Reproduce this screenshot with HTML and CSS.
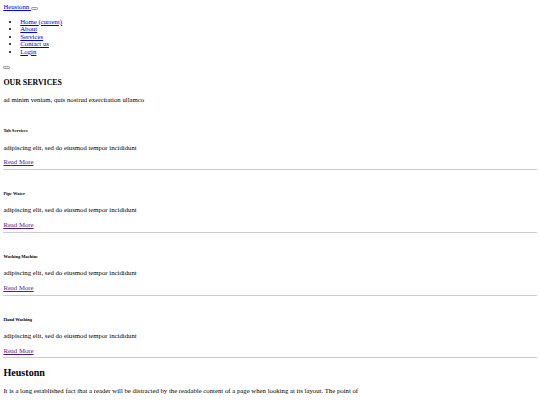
FILE: index.html
```html
<!DOCTYPE html>
<html lang="en">
<head>
    <meta charset="UTF-8">
    <meta name="viewport" content="width=device-width, initial-scale=1.0">
    <title>Heustonn</title>
    <link rel="stylesheet" href="styles.css">
</head>
<body>
    <nav class="navbar">
        <a class="brand" href="#">Heustonn </a><button class="btn"></button>
        <div class="nav-menu">
            <ul class="nav-list">
                <li><a href="#">Home <span>(current)</span></a></li>
                <li><a href="#">About</a></li>
                <li><a href="#">Services</a></li>
                <li><a href="#">Contact us</a></li>
                <li><a href="#">Login</a></li>
            </ul>
            <div class="search"><button class="btn"></button></div>
        </div>
    </nav>

    <section class="services">
        <h3>OUR SERVICES</h3>
        <p>ad minim veniam, quis nostrud exercitation ullamco</p>

        <div class="service">
            <div class="service-img"></div>
            <h6>Tab Services</h6>
            <p>adipiscing elit, sed do eiusmod tempor incididunt</p>
            <a class="read-more" href="#">Read More</a>
            <hr>
        </div>
        <div class="service">
            <div class="service-img"></div>
            <h6>Pipe Water</h6>
            <p>adipiscing elit, sed do eiusmod tempor incididunt</p>
            <a class="read-more" href="#">Read More</a>
            <hr>
        </div>
        <div class="service">
            <div class="service-img"></div>
            <h6>Washing Machine</h6>
            <p>adipiscing elit, sed do eiusmod tempor incididunt</p>
            <a class="read-more" href="#">Read More</a>
            <hr>
        </div>
        <div class="service">
            <div class="service-img"></div>
            <h6>Hand Washing</h6>
            <p>adipiscing elit, sed do eiusmod tempor incididunt</p>
            <a class="read-more" href="#">Read More</a>
            <hr>
        </div>
    </section>

    <footer class="footer">
        <h2>Heustonn</h2>
        <p>It is a long established fact that a reader will be distracted by the readable content of a page when looking at its layout. The point of</p>
    </footer>
</body>
</html>
```

FILE: styles.css
```css
/* page was taken at 1280px wide, shown at 540px */
html {
    zoom: 0.421875;
}
body {
    margin: 8px;
    font-family: "Liberation Serif", "Times New Roman", serif;
    font-size: 16px;
    line-height: 1.12;
    color: #000000;
    overflow-x: hidden;
}
a {
    color: #0000ee;
}
.read-more {
    color: #551a8b;
}
.btn {
    width: 16px;
    height: 7px;
    padding: 0;
    border: 2px solid #9a9a9a;
    border-radius: 3px;
    background-color: #efefef;
    vertical-align: baseline;
}
.services {
    padding-top: 4px;
}
.service-img {
    height: 17px;
}
hr {
    height: 0;
    margin: 8px 0;
    border: 0;
    border-top: 2px solid #cccccc;
}
```
